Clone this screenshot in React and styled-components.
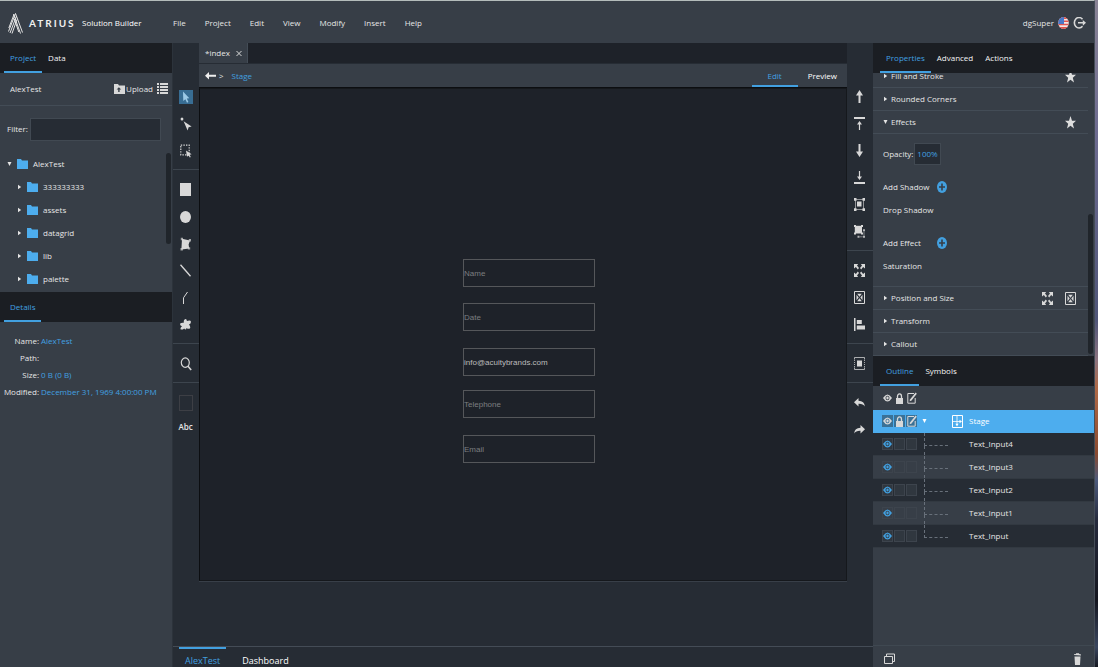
import React from "react";
import styled, { createGlobalStyle, css } from "styled-components";

const color = {
  panel: "#373e47",
  dark: "#1b1e23",
  stage: "#1e2229",
  rail: "#262c34",
  line: "#434c56",
  text: "#e6e6e6",
  blue: "#42a0e0",
  bright: "#4dadee",
};

const GlobalStyle = createGlobalStyle`
  * { box-sizing: border-box; }
  body { margin: 0; background: ${color.rail}; }
  body, button, input {
    font-family: "Open Sans", "Noto Sans", sans-serif;
    font-size: 8px;
    line-height: 12px;
    color: ${color.text};
  }
  button { background: none; border: 0; padding: 0; cursor: pointer; }
  h1, ul, dl, dd { margin: 0; padding: 0; }
  ul { list-style: none; }
  svg { display: block; flex: none; }
`;

/* ---------- frame ---------- */
const Page = styled.div`
  height: 100vh;
  min-height: 600px;
  display: flex;
  background: linear-gradient(#8a8496 0, #6d6b90 20%, #4f5578 48%, #8c7480 54%, #b06a48 58%, #8a4a30 68%, #4c5a7c 72%, #252a3c 78%, #14161f 90%, #3a465f 97%, #151821 100%);
  padding-right: 3px;
`;
const Shell = styled.div`
  flex: 1;
  min-width: 0;
  display: flex;
  flex-direction: column;
  border-top: 1px solid #b4bcbb;
  border-right: 1px solid #444c56;
  background: ${color.panel};
`;
const Body = styled.div`
  flex: 1;
  min-height: 0;
  display: flex;
`;

/* ---------- header ---------- */
const Header = styled.header`
  height: 42px;
  display: flex;
  align-items: center;
  padding: 2px 8px 0 8px;
`;
const Brand = styled.div`
  width: 165px;
  display: flex;
  align-items: center;
  gap: 6px;
`;
const Wordmark = styled.span`
  width: 47px;
  white-space: nowrap;
  font-family: Lato, sans-serif;
  font-size: 10px;
  font-weight: 700;
  letter-spacing: 2px;
  color: #f0f0f0;
`;
const Product = styled.h1`
  font-size: 8px;
  font-weight: 400;
  color: #fff;
`;
const Menu = styled.nav`
  flex: 1;
  display: flex;
  gap: 19px;
`;
const Account = styled.div`
  display: flex;
  align-items: center;
  gap: 4px;
`;

/* ---------- tabs ---------- */
const TabBar = styled.div`
  height: 30px;
  flex: none;
  display: flex;
  padding: 0 4px;
  background: ${color.dark};
`;
const Tab = styled.button`
  padding: 2px 6px 0;
  color: ${(p) => (p.$active ? color.blue : "#f4f4f4")};
  border-bottom: 2px solid ${(p) => (p.$active ? color.blue : "transparent")};
`;

/* ---------- left panel ---------- */
const LeftPanel = styled.aside`
  width: 173px;
  flex: none;
  display: flex;
  flex-direction: column;
  border-right: 1px solid #2c333b;
`;
const ProjectRow = styled.div`
  height: 33px;
  display: flex;
  align-items: center;
  padding: 0 4px 0 10px;
  border-bottom: 1px solid ${color.line};
`;
const Upload = styled.button`
  display: flex;
  align-items: center;
  gap: 1px;
  margin: 0 4px 0 auto;
`;
const FilterRow = styled.label`
  height: 46px;
  display: flex;
  align-items: center;
  gap: 2px;
  padding: 0 11px 0 7px;
`;
const FilterInput = styled.input`
  flex: 1;
  min-width: 0;
  height: 23px;
  background: ${color.rail};
  border: 1px solid #414952;
`;
const TreeWrap = styled.div`
  height: 140px;
  display: flex;
  justify-content: space-between;
`;
const TreeRow = styled.li`
  height: 23px;
  display: flex;
  align-items: center;
  gap: 5px;
  padding-left: ${(p) => (p.$root ? 7 : 17)}px;
`;
const Scrollbar = styled.div`
  width: 5px;
  height: ${(p) => p.$length}px;
  margin: ${(p) => (p.$end ? "auto 1px 2px 0" : "1px 1px 0 0")};
  border-radius: 3px;
  background: #20252b;
`;
const Details = styled.dl`
  padding: 10px 5px;
`;
const Detail = styled.div`
  height: 17px;
  display: flex;
  align-items: center;
  gap: 2px;
  dt { width: 34px; white-space: nowrap; display: flex; justify-content: flex-end; }
  dd { color: ${color.blue}; white-space: nowrap; }
`;

/* ---------- centre ---------- */
const Center = styled.main`
  flex: 1;
  min-width: 0;
  display: flex;
  flex-direction: column;
  background: ${color.rail};
`;
const Work = styled.div`
  flex: 1;
  min-height: 0;
  display: flex;
`;
const Rail = styled.div`
  width: 26px;
  flex: none;
  padding-top: 34px;
`;
const ToolGroup = styled.div`
  display: flex;
  flex-direction: column;
  padding: 6px 0 5px;
  border-bottom: 1px solid ${(p) => (p.$last ? "transparent" : "#3d454e")};
`;
const Tool = styled.button`
  height: ${(p) => (p.$text ? 22 : 27)}px;
  display: flex;
  align-items: center;
  justify-content: center;
  padding-right: 1px;
  font-weight: 600;
`;
const Selected = styled.span`
  background: #386d93;
`;
const Swatch = styled.span`
  width: 14px;
  height: 16px;
  border: 1px solid #3d3f45;
`;
const Editor = styled.section`
  flex: 1;
  min-width: 0;
  display: flex;
  flex-direction: column;
  padding-bottom: 65px;
`;
const DocTabs = styled.div`
  height: 20px;
  flex: none;
  display: flex;
  background: ${color.stage};
`;
const DocTab = styled.button`
  display: flex;
  align-items: center;
  gap: 6px;
  padding: 0 5px 0 6px;
  background: ${color.panel};
  border-right: 1px solid #434c56;
`;
const PathBar = styled.div`
  height: 25px;
  flex: none;
  display: flex;
  align-items: stretch;
  background: ${color.panel};
  border-top: 1px solid ${color.rail};
  border-bottom: 1px solid #0c0e11;
`;
const Crumbs = styled.div`
  flex: 1;
  display: flex;
  align-items: center;
  gap: 3px;
  padding-left: 6px;
  a { color: ${color.blue}; text-decoration: none; margin-left: 5px; }
`;
const ModeTab = styled.button`
  padding: 2px ${(p) => (p.$active ? 16 : 10)}px 0;
  color: ${(p) => (p.$active ? color.blue : "#fff")};
  border-bottom: 2px solid ${(p) => (p.$active ? color.blue : "transparent")};
`;
const Canvas = styled.div`
  flex: 1;
  position: relative;
  background: ${color.stage};
  border: 1px solid #15181c;
  border-left-color: #0c0e11;
  box-shadow: 0 1px 0 #383f48;
`;
const Field = styled.input`
  position: absolute;
  left: 263px;
  top: ${(p) => p.$top}px;
  width: 132px;
  height: 28px;
  padding: 0;
  background: transparent;
  border: 1px solid #55575a;
  color: #bcbcbc;
  font-family: "Liberation Sans", Arial, sans-serif;
  &::placeholder { color: #7c7e80; opacity: 1; }
`;
const PageTabs = styled.div`
  height: 21px;
  flex: none;
  display: flex;
  gap: 10px;
  padding-left: 6px;
  border-top: 1px solid #444c56;
`;
const PageTab = styled.button`
  padding: 5px 6px 0;
  font-size: 9px;
  color: ${(p) => (p.$active ? color.blue : "#fff")};
  border-top: 2px solid ${(p) => (p.$active ? color.blue : "transparent")};
`;

/* ---------- right panel ---------- */
const RightPanel = styled.aside`
  width: 221px;
  flex: none;
  display: flex;
  flex-direction: column;
`;
const RightTabs = styled(TabBar)`
  padding: 0 7px;
`;
const Properties = styled.div`
  height: 283px;
  flex: none;
  display: flex;
  overflow: hidden;
`;
const Sections = styled.div`
  flex: 1;
  display: flex;
  flex-direction: column;
  justify-content: flex-end;
`;
const Section = styled.div`
  height: 23px;
  flex: none;
  display: flex;
  align-items: center;
  gap: 12px;
  padding: 0 12px 0 10px;
  border-bottom: 1px solid ${color.line};
`;
const SectionToggle = styled.button`
  flex: 1;
  display: flex;
  align-items: center;
  gap: 3px;
`;
const Effects = styled.div`
  padding: 8px 10px 9px;
  display: flex;
  flex-direction: column;
  gap: 10px;
  border-bottom: 1px solid ${color.line};
`;
const EffectRow = styled.div`
  height: 23px;
  display: flex;
  align-items: center;
  > :first-child { min-width: ${(p) => (p.$wide ? 54 : 31)}px; }
`;
const OpacityInput = styled.input`
  width: 27px;
  height: 22px;
  padding: 0;
  text-align: center;
  background: ${color.rail};
  border: 1px solid #414952;
  color: ${color.blue};
`;
const OutlineHead = styled.div`
  height: 24px;
  flex: none;
  display: flex;
  align-items: center;
  gap: 1px;
  padding-left: 9px;
`;
const OutlineRow = styled.li`
  height: 23px;
  display: flex;
  align-items: center;
  gap: 1px;
  padding-left: 9px;
  border-bottom: 1px solid ${(p) => (p.$root ? color.bright : "#323941")};
  background: ${(p) => (p.$root ? color.bright : p.$odd ? color.rail : color.panel)};
  color: ${(p) => (p.$root ? "#fff" : color.text)};
`;
const Cell = styled.button`
  width: 11px;
  height: 12px;
  display: flex;
  align-items: center;
  justify-content: center;
  ${(p) => p.$box && css`
    background: ${p.$root ? "#3a7196" : p.$odd ? "#30373f" : "#373e47"};
    border: ${p.$root ? "0" : "1px solid #3d444d"};
  `}
`;
const Branch = styled.span`
  align-self: stretch;
  width: 24px;
  margin: 0 20px 0 6px;
  display: flex;
  flex-direction: column;
  &::before {
    content: "";
    height: 12px;
    border-left: 1px dashed #68707a;
    border-bottom: 1px dashed #68707a;
  }
  &::after {
    content: "";
    flex: 1;
    border-left: 1px dashed ${(p) => (p.$last ? "transparent" : "#68707a")};
  }
`;
const RootMark = styled.span`
  display: flex;
  align-items: center;
  gap: 25px;
  margin: 0 5px 0 4px;
`;
const PanelFooter = styled.footer`
  height: 22px;
  margin-top: auto;
  display: flex;
  align-items: center;
  justify-content: space-between;
  padding: 4px 13px 0 11px;
  border-top: 1px solid #3f4851;
`;

/* ---------- drawings ---------- */
const fill = "#d8d8d8";
const Icon = ({ w = 12, h = 14, children, color: c = fill }) => (
  <svg width={w} height={h} viewBox={`0 0 ${w} ${h}`} fill={c} stroke="none" aria-hidden="true">
    {children}
  </svg>
);
const Line = ({ d, width = 1, ...rest }) => <path d={d} fill="none" stroke={fill} strokeWidth={width} {...rest} />;

const Logo = () => (
  <Icon w={15} h={21} color="none">
    <g stroke="#e6e6e6" strokeWidth="1" fill="none">
      <path d="M5.5 1 12.5 20.5M7.5 .5 14.5 19.5M6.3 6 10.8 19" />
      <path d="M7.5 .5 .5 18.5M8.5 3 2 20M9 6.5 4 20.5M6 1.5 .8 15" />
    </g>
  </Icon>
);
const Caret = ({ open, color: c = "#e4e4e4" }) => (
  <Icon w={5} h={6} color={c}>
    {open ? <path d="M.5 1h4L2.5 5z" /> : <path d="M1 .8 4.2 3 1 5.2z" />}
  </Icon>
);
const Folder = () => (
  <Icon w={11} h={10} color={color.bright}>
    <path d="M0 0h4l1 1.5h6V10H0z" />
  </Icon>
);
const UploadFolder = () => (
  <Icon w={11} h={10}>
    <path fillRule="evenodd" d="M0 0h4l1 1.5h6V10H0zM4.9 3.2 2.6 5.6h1.6V8h1.4V5.6h1.6z" />
  </Icon>
);
const ListIcon = () => (
  <Icon w={11} h={12}>
    <path d="M0 0h2v2H0zM3 0h8v2H3zM0 3h2v2H0zM3 3h8v2H3zM0 6h2v2H0zM3 6h8v2H3zM0 9h2v2H0zM3 9h8v2H3z" />
  </Icon>
);
const Flag = () => (
  <Icon w={11} h={13} color="#fff">
    <clipPath id="flag"><ellipse cx="5.5" cy="6" rx="5.3" ry="6" /></clipPath>
    <g clipPath="url(#flag)">
      <path fill="#f3e6e6" d="M0 0h11v13H0z" />
      <path fill="#e0554f" d="M0 0h11v2H0zM0 3.5h11V5H0zM0 6.7h11v1.5H0zM0 10h11v3H0z" />
      <path fill="#4a78c8" d="M0 0h6v7H0z" />
    </g>
  </Icon>
);
const Logout = () => (
  <Icon w={13} h={13}>
    <Line width={1.6} d="M9.5 2.2A4.7 5.2 0 1 0 9.5 9.3" />
    <path d="M5 5.1h4.8V2.9L13 5.8 9.8 8.7V6.5H5z" />
  </Icon>
);
const Star = () => (
  <Icon w={11} h={13} color="#dedede">
    <path d="M5.5 0 7 4.8h4L7.8 7.8 9 12.6 5.5 9.7 2 12.6l1.2-4.8L0 4.8h4z" />
  </Icon>
);
const Plus = () => (
  <Icon w={10} h={12} color={color.blue}>
    <ellipse cx="5" cy="6" rx="5" ry="6" />
    <path d="M5 2.6v6.8M2 6h6" stroke={color.panel} strokeWidth="1.6" />
  </Icon>
);
const Eye = ({ c = fill }) => (
  <Icon w={9} h={8} color={c}>
    <path fillRule="evenodd" d="M0 4Q4.5-3 9 4 4.5 11 0 4zM4.5 1.7a1.9 2.3 0 1 0 .01 0z" />
    <ellipse cx="4.5" cy="4" rx="1.2" ry="1.4" />
  </Icon>
);
const Lock = () => (
  <Icon w={7} h={11}>
    <Line width={1.3} d="M1.5 5.5V3.4a2 2.6 0 0 1 4 0v2.1" />
    <path d="M0 5h7v6H0z" />
  </Icon>
);
const Pencil = () => (
  <Icon w={10} h={12}>
    <Line d="M7 1.5H.8v9.7h7.4V6" />
    <path d="M3 7.4 8.6.6l1.2 1.2L4.3 8.7 2.6 9.2z" />
  </Icon>
);
const StageIcon = () => (
  <Icon w={11} h={13}>
    <path d="M.5.5h10v12H.5z" stroke="#fff" fill="none" />
    <path d="M5 1v8M1 6.5h7" stroke="#fff" strokeWidth=".8" fill="none" />
    <path fill="#fff" d="M7.5 4.7 10 6.5 7.5 8.3zM3.4 8.8h3.2L5 11.5z" />
  </Icon>
);
const Expand = () => (
  <Icon w={11} h={13}>
    <path d="M0 0h4.2L3 1.5l2 2.6-1.2 1.3-1.9-2.5L0 4.6zM11 0H6.8L8 1.5l-2 2.6 1.2 1.3 1.9-2.5L11 4.6zM0 13h4.2L3 11.5l2-2.6-1.2-1.3-1.9 2.5L0 8.4zM11 13H6.8L8 11.5l-2-2.6 1.2-1.3 1.9 2.5L11 8.4z" />
  </Icon>
);
const FitBox = () => (
  <Icon w={11} h={13}>
    <Line d="M.5.5h10v12h-10z" />
    <path d="M3.2 2.8h4.6L5.5 5.8zM3.2 10.2h4.6L5.5 7.2zM2.5 3.8v5.4l2.2-2.7zM8.5 3.8v5.4L6.3 6.5z" />
  </Icon>
);
const BackArrow = () => (
  <Icon w={11} h={8} color="#eee">
    <path d="M4 0v2.8h7v2H4v2.8L0 3.8z" />
  </Icon>
);
const Copies = () => (
  <Icon w={11} h={12}>
    <Line d="M.5 3.5h8v7h-8zM2.5 3V1h8v7.5H9" />
  </Icon>
);
const Trash = () => (
  <Icon w={7} h={12}>
    <path d="M0 1.2 2 1V.2h3L5.2 1l1.8.4v1.1L0 1.9zM.5 3.5h6L6 12H1z" />
  </Icon>
);

const Pointer = () => (
  <Icon w={14} h={14}>
    <path fill="#9cc9e6" d="M4 1.5 10.3 8.2 7.8 8.6 9.4 12 8 12.7 6.4 9.3 4.3 11z" />
  </Icon>
);
const NodePointer = () => (
  <Icon w={12} h={14}>
    <ellipse cx="2" cy="2" rx="1.4" ry="1.6" />
    <path d="M3.6 4.2 11.6 9.4 8.6 10.2 7.6 13.6z" />
  </Icon>
);
const Marquee = () => (
  <Icon w={12} h={14}>
    <Line width={1.2} strokeDasharray="1.4 1.2" d="M.8 1.2h8.4v9.6H.8z" />
    <path d="M6 6.5 11.6 10.2 9.6 10.8 10.8 13 9.8 13.6 8.6 11.4 7 12.8z" />
  </Icon>
);
const Rect = () => <Icon w={11} h={13}><path d="M0 0h11v13H0z" /></Icon>;
const Circle = () => <Icon w={11} h={12}><ellipse cx="5.5" cy="6" rx="5.5" ry="5.9" /></Icon>;
const Polygon = () => (
  <Icon w={11} h={14}>
    <path d="M2 1.8 10 3.4 8.6 7.5 9.2 11.4 5.5 12 1.4 12.6z" />
    <path d="M.8.8H3v2.4H.8zM8.8 2H11v2.4H8.8zM.5 11h2.4v2.4H.5zM7.8 10.2h2.4v2.4H7.8z" opacity=".7" />
  </Icon>
);
const Diagonal = () => <Icon w={11} h={13}><Line width={1.3} d="M.5.7 10.5 12.2" /></Icon>;
const Polyline = () => <Icon w={11} h={13}><Line d="M3.5 13V6.8L7.5 1" /></Icon>;
const Blob = () => (
  <Icon w={11} h={13}>
    <path d="M4.3 1.8Q6.5-.3 6.9 3 10.4 1.5 11 3.8 11 5.8 9 6.5 11 9.3 9.8 10.5 8.2 11.3 6.6 9.9 5.8 12.8 4.2 10.4 2 12.3.5 11.2.2 9.8 2 8.3-.4 7.5.2 5.6 1.6 4.3 3.8 4.8 3.6 2.6 4.3 1.8z" />
  </Icon>
);
const Search = () => (
  <Icon w={12} h={14}>
    <ellipse cx="5.3" cy="5.6" rx="4" ry="4.7" fill="none" stroke={fill} strokeWidth="1.2" />
    <Line width={1.5} d="M8 9.2 11.2 13" />
  </Icon>
);
const Up = () => <Icon w={7} h={13}><path d="M3.5 0 7 5.5H4.5V13h-2V5.5H0z" /></Icon>;
const Down = () => <Icon w={7} h={13}><path d="M3.5 13 7 7.5H4.5V0h-2v7.5H0z" /></Icon>;
const ToTop = () => (
  <Icon w={11} h={13}><path d="M0 0h11v2H0zM5.5 4 8 7.4H6.1V13H4.9V7.4H3z" /></Icon>
);
const ToBottom = () => (
  <Icon w={11} h={13}><path d="M0 11h11v2H0zM5.5 9 8 5.6H6.1V0H4.9v5.6H3z" /></Icon>
);
const Group = () => (
  <Icon w={11} h={13}>
    <Line d="M1.5 1.5h8v10h-8z" opacity=".6" />
    <path d="M0 0h2.5v2.8H0zM8.5 0H11v2.8H8.5zM0 10.2h2.5V13H0zM8.5 10.2H11V13H8.5zM3 3.5h4.5v5H3z" />
  </Icon>
);
const Ungroup = () => (
  <Icon w={11} h={13}>
    <path d="M.8.8h7.2v7.7H.8z" />
    <path d="M0 0h2v2H0zM7 0h2v2H7zM0 7.5h2v2H0zM7 7.5h2v2H7z" />
    <path d="M9 4.2h2v2H9zM9 10.8h2v2H9zM3.5 10.8h2v2h-2z" opacity=".8" />
    <Line d="M10 6.5v4M5.8 11.8h3" opacity=".5" />
  </Icon>
);
const AlignLeft = () => (
  <Icon w={11} h={13}><path d="M0 0h1.5v13H0zM2.800 2h5v4h-5zM2.800 7.5H11v4H2.800z" /></Icon>
);
const Crop = () => (
  <Icon w={11} h={13}>
    <Line d="M.5 2.5v-2h10v2M.5 10.5v2h10v-2" opacity=".75" />
    <Line strokeDasharray="1 1" d="M.5 3v7M10.5 3v7" opacity=".7" />
    <path d="M3 3.5h5v6H3z" />
  </Icon>
);
const Undo = () => (
  <Icon w={11} h={9}><path d="M4.5 0v2.7Q10.5 2.800 10.800 8.5 9 5.600 4.5 5.800V8.5L0 4.200z" /></Icon>
);
const Redo = () => (
  <Icon w={11} h={9}><path d="M6.5 0v2.7Q.5 2.800.2 8.5 2 5.600 6.5 5.800V8.5L11 4.200z" /></Icon>
);

/* ---------- data ---------- */
const menus = ["File", "Project", "Edit", "View", "Modify", "Insert", "Help"];
const folders = ["333333333", "assets", "datagrid", "lib", "palette"];
const details = [
  ["Name:", "AlexTest"],
  ["Path:", ""],
  ["Size:", "0 B (0 B)"],
  ["Modified:", "December 31, 1969 4:00:00 PM"],
];
const leftTools = [
  [["Node select", NodePointer], ["Marquee", Marquee]],
  [["Rectangle", Rect], ["Ellipse", Circle], ["Polygon", Polygon], ["Line", Diagonal], ["Polyline", Polyline], ["Freeform", Blob]],
  [["Zoom", Search]],
];
const rightTools = [
  [["Move up", Up], ["Bring to front", ToTop], ["Move down", Down], ["Send to back", ToBottom], ["Group", Group], ["Ungroup", Ungroup]],
  [["Expand", Expand], ["Fit", FitBox], ["Align", AlignLeft]],
  [["Crop", Crop]],
  [["Undo", Undo], ["Redo", Redo]],
];
const fields = [
  { label: "Name", top: 170 },
  { label: "Date", top: 214 },
  { label: "Contact", value: "info@acuitybrands.com", top: 259 },
  { label: "Telephone", top: 301 },
  { label: "Email", top: 346 },
];
const outline = ["Text_Input4", "Text_Input3", "Text_Input2", "Text_Input1", "Text_Input"];

const Tools = ({ items }) =>
  items.map(([label, Glyph]) => (
    <Tool key={label} aria-label={label}><Glyph /></Tool>
  ));

const PropertySection = ({ title, open, children }) => (
  <Section>
    <SectionToggle aria-expanded={!!open}><Caret open={open} />{title}</SectionToggle>
    {children}
  </Section>
);

export default function App() {
  return (
    <>
      <GlobalStyle />
      <Page>
        <Shell>
          <Header>
            <Brand>
              <Logo />
              <Wordmark>ATRIUS</Wordmark>
              <Product>Solution Builder</Product>
            </Brand>
            <Menu>{menus.map((m) => <button key={m}>{m}</button>)}</Menu>
            <Account>
              <span>dgSuper</span>
              <Flag />
              <button aria-label="Log out"><Logout /></button>
            </Account>
          </Header>
          <Body>
            <LeftPanel>
              <TabBar><Tab $active>Project</Tab><Tab>Data</Tab></TabBar>
              <ProjectRow>
                <span>AlexTest</span>
                <Upload><UploadFolder />Upload</Upload>
                <button aria-label="List view"><ListIcon /></button>
              </ProjectRow>
              <FilterRow>Filter:<FilterInput type="text" /></FilterRow>
              <TreeWrap>
                <ul>
                  <TreeRow $root><Caret open /><Folder />AlexTest</TreeRow>
                  {folders.map((f) => <TreeRow key={f}><Caret /><Folder />{f}</TreeRow>)}
                </ul>
                <Scrollbar $length={91} />
              </TreeWrap>
              <TabBar><Tab $active>Details</Tab></TabBar>
              <Details>
                {details.map(([k, v]) => <Detail key={k}><dt>{k}</dt><dd>{v}</dd></Detail>)}
              </Details>
            </LeftPanel>

            <Center>
              <Work>
                <Rail>
                  <ToolGroup>
                    <Tool aria-label="Select"><Selected><Pointer /></Selected></Tool>
                    <Tools items={leftTools[0]} />
                  </ToolGroup>
                  <ToolGroup><Tools items={leftTools[1]} /></ToolGroup>
                  <ToolGroup><Tools items={leftTools[2]} /></ToolGroup>
                  <ToolGroup $last>
                    <Tool aria-label="Fill"><Swatch /></Tool>
                    <Tool $text>Abc</Tool>
                  </ToolGroup>
                </Rail>
                <Editor>
                  <DocTabs><DocTab>*index<Icon w={6} h={7}><Line d="M.5 1 5.5 6M5.5 1 .5 6" /></Icon></DocTab></DocTabs>
                  <PathBar>
                    <Crumbs><BackArrow /><span>&gt;</span><a href="#stage">Stage</a></Crumbs>
                    <ModeTab $active>Edit</ModeTab>
                    <ModeTab>Preview</ModeTab>
                  </PathBar>
                  <Canvas>
                    {fields.map((f) => (
                      <Field key={f.label} $top={f.top} aria-label={f.label} placeholder={f.value ? undefined : f.label} defaultValue={f.value} />
                    ))}
                  </Canvas>
                </Editor>
                <Rail>
                  {rightTools.map((g, i) => (
                    <ToolGroup key={i} $last={i === rightTools.length - 1}><Tools items={g} /></ToolGroup>
                  ))}
                </Rail>
              </Work>
              <PageTabs><PageTab $active>AlexTest</PageTab><PageTab>Dashboard</PageTab></PageTabs>
            </Center>

            <RightPanel>
              <RightTabs><Tab $active>Properties</Tab><Tab>Advanced</Tab><Tab>Actions</Tab></RightTabs>
              <Properties>
                <Sections>
                  <PropertySection title="Fill and Stroke"><Star /></PropertySection>
                  <PropertySection title="Rounded Corners" />
                  <PropertySection title="Effects" open><Star /></PropertySection>
                  <Effects>
                    <EffectRow as="label"><span>Opacity:</span><OpacityInput type="text" defaultValue="100%" /></EffectRow>
                    <div>
                      <EffectRow $wide><span>Add Shadow</span><button aria-label="Add shadow"><Plus /></button></EffectRow>
                      <EffectRow>Drop Shadow</EffectRow>
                    </div>
                    <div>
                      <EffectRow $wide><span>Add Effect</span><button aria-label="Add effect"><Plus /></button></EffectRow>
                      <EffectRow>Saturation</EffectRow>
                    </div>
                  </Effects>
                  <PropertySection title="Position and Size"><Expand /><FitBox /></PropertySection>
                  <PropertySection title="Transform" />
                  <PropertySection title="Callout" />
                </Sections>
                <Scrollbar $length={140} $end />
              </Properties>
              <RightTabs><Tab $active>Outline</Tab><Tab>Symbols</Tab></RightTabs>
              <OutlineHead><Cell aria-label="Show all"><Eye /></Cell><Cell aria-label="Lock all"><Lock /></Cell><Cell aria-label="Edit all"><Pencil /></Cell></OutlineHead>
              <ul>
                <OutlineRow $root>
                  <Cell $box $root aria-label="Show"><Eye /></Cell>
                  <Cell $box $root aria-label="Lock"><Lock /></Cell>
                  <Cell $box $root aria-label="Edit"><Pencil /></Cell>
                  <RootMark><Caret open color="#fff" /><StageIcon /></RootMark>
                  Stage
                </OutlineRow>
                {outline.map((name, i) => (
                  <OutlineRow key={name} $odd={i % 2 === 0}>
                    <Cell $box $odd={i % 2 === 0} aria-label="Show"><Eye c={color.blue} /></Cell>
                    <Cell $box $odd={i % 2 === 0} aria-label="Lock" />
                    <Cell $box $odd={i % 2 === 0} aria-label="Edit" />
                    <Branch $last={i === outline.length - 1} />
                    {name}
                  </OutlineRow>
                ))}
              </ul>
              <PanelFooter>
                <button aria-label="Duplicate"><Copies /></button>
                <button aria-label="Delete"><Trash /></button>
              </PanelFooter>
            </RightPanel>
          </Body>
        </Shell>
      </Page>
    </>
  );
}
